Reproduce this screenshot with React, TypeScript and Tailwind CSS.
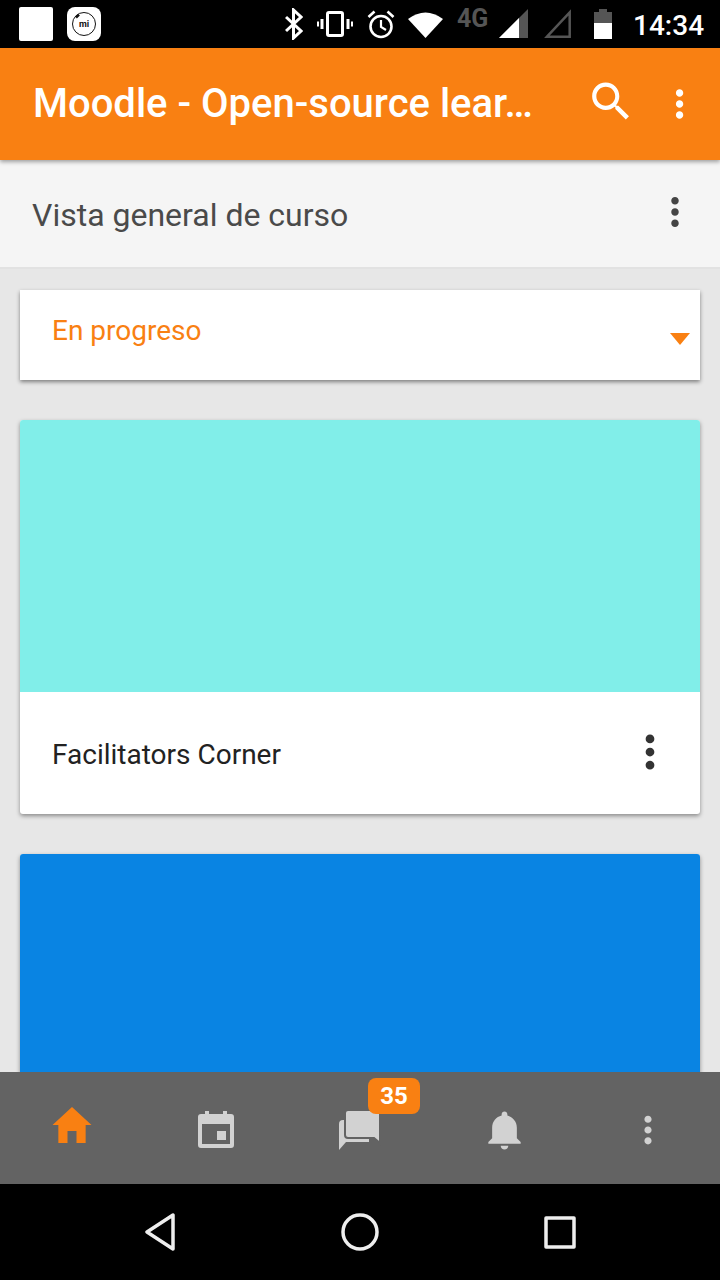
import { IoMdHome, IoMdNotifications, IoMdMore, IoMdSearch } from "react-icons/io";

function StatusBar() {
  return (
    <div className="h-12 shrink-0 bg-black flex items-center text-white relative z-20">
      <div className="ml-[19px] w-[34px] h-[34px] bg-white rounded-[2px]" />
      <div className="ml-[14px] w-[34px] h-[34px] bg-white rounded-[8px] flex items-center justify-center">
        <svg width="26" height="26" viewBox="0 0 26 26">
          <circle cx="13" cy="13" r="11.5" fill="none" stroke="#111" strokeWidth="1" />
          <path d="M5 6.5 L8 3.6" stroke="#111" strokeWidth="2.5" fill="none" />
          <text x="13" y="16" textAnchor="middle" fontSize="9" fontWeight="700" fontFamily="Roboto, sans-serif" fill="#111">mi</text>
        </svg>
      </div>
      <svg className="ml-[184px]" width="18" height="32" viewBox="0 0 18 32" fill="none" stroke="#fff" strokeWidth="3">
        <path d="M1 9 L16 23 L8.5 30 V2 L16 9 L1 23" />
      </svg>
      <svg className="ml-[14px]" width="36" height="26" viewBox="0 0 36 26" fill="none" stroke="#fff">
        <rect x="10.5" y="1.5" width="15" height="23" rx="1.5" strokeWidth="3" />
        <path d="M5 8 V18 M31 8 V18" strokeWidth="3" />
        <path d="M1 10.5 V15.5 M35 10.5 V15.5" strokeWidth="2" />
      </svg>
      <svg className="ml-[14px]" width="28" height="29" viewBox="0 0 28 29" fill="none" stroke="#fff" strokeWidth="2.6">
        <circle cx="14" cy="16.5" r="10.5" />
        <path d="M14 10 V17 L19 20" strokeWidth="2.2" />
        <path d="M1.5 7 L7.5 1.5 M26.5 7 L20.5 1.5" />
      </svg>
      <svg className="ml-[13px]" width="35" height="27" viewBox="0 0 35 27">
        <path d="M0 8 Q17.5 -5 35 8 L17.5 27 Z" fill="#fff" />
      </svg>
      <span className="ml-[14px] -mt-[11px] w-[34px] font-['Roboto',sans-serif] font-bold text-[25px] leading-none text-[#555]">4G</span>
      <svg className="ml-[8px] -mt-[1px]" width="29" height="29" viewBox="0 0 29 29">
        <path d="M0 29 L29 0 V29 Z" fill="#555" />
        <path d="M0 29 L20 9 V29 Z" fill="#fff" />
      </svg>
      <svg className="ml-[16px] -mt-[1px]" width="27" height="29" viewBox="0 0 27 29" fill="none" stroke="#555" strokeWidth="2.5">
        <path d="M3 27.7 L25.7 3.5 V27.7 Z" />
      </svg>
      <svg className="ml-[23px]" width="18" height="30" viewBox="0 0 18 30">
        <path d="M5 0 H13 V3 H18 V30 H0 V3 H5 Z" fill="#555" />
        <rect x="0" y="14" width="18" height="16" fill="#fff" />
      </svg>
      <span className="ml-[21px] mt-[3px] font-['Roboto',sans-serif] font-medium text-[28px] leading-none">14:34</span>
    </div>
  );
}

function CalendarIcon() {
  return (
    <svg className="mt-1" width="38" height="38" viewBox="0 0 38 38" fill="currentColor">
      <path fillRule="evenodd" d="M8 0 H12 V3 H26 V0 H30 V3 H34 Q37 3 37 6 V34 Q37 37 34 37 H4 Q1 37 1 34 V6 Q1 3 4 3 H8 Z M5 13 V33 H33 V13 Z" />
      <rect x="20" y="20" width="9" height="9" />
    </svg>
  );
}

function ChatIcon() {
  return (
    <svg className="mt-1" width="42" height="40" viewBox="0 0 42 40" fill="currentColor">
      <path d="M0 14 Q0 10 4 10 H30 V32 H7 L0 40 Z" />
      <path d="M9 0 H37 Q41 0 41 3 V33 L35 28 H9 Q6 28 6 25 V3 Q6 0 9 0 Z" stroke="#636363" strokeWidth="2" />
    </svg>
  );
}

function CourseCard({ color, name }: { color: string; name: string }) {
  return (
    <div className="bg-white rounded-[3px] overflow-hidden shadow-[0_2px_4px_rgba(0,0,0,0.4)] shrink-0">
      <div className="h-[272px]" style={{ background: color }} />
      <div className="h-[122px] flex items-center justify-between pl-8 pr-[22px]">
        <span className="text-[28px] text-[#222] mt-1">{name}</span>
        <IoMdMore size={56} className="text-[#333] -mt-[2px]" />
      </div>
    </div>
  );
}

export default function App() {
  return (
    <div className="w-[720px] h-[1280px] flex flex-col overflow-hidden bg-[#e7e7e7] font-['Roboto',sans-serif]">
      <StatusBar />
      <header className="h-[112px] shrink-0 bg-[#f98012] flex items-center pl-[33px] pr-[17px] shadow-[0_2px_4px_rgba(0,0,0,0.35)] relative z-10">
        <h1 className="w-[503px] whitespace-nowrap text-[40px] font-medium text-white">Moodle - Open-source lear…</h1>
        <IoMdSearch size={50} className="ml-[53px] -mt-[6px] text-white" />
        <IoMdMore size={48} className="ml-[21px] text-white" />
      </header>
      <div className="h-[109px] shrink-0 bg-[#f5f5f5] border-b-2 border-[#e2e2e2] flex items-center justify-between pl-8 pr-[21px]">
        <span className="text-[32px] text-[#4a4a4a] mt-[2px]">Vista general de curso</span>
        <IoMdMore size={48} className="text-[#444] -mt-[3px]" />
      </div>
      <main className="flex-1 min-h-0 overflow-hidden px-5 pt-[21px] flex flex-col gap-10">
        <div className="h-[90px] shrink-0 bg-white shadow-[0_2px_4px_rgba(0,0,0,0.45)] flex items-center justify-between pl-8 pr-[10px]">
          <span className="text-[28px] text-[#f98012] -mt-2">En progreso</span>
          <svg className="mt-2" width="20" height="12" viewBox="0 0 20 12">
            <path d="M0 0 H20 L10 12 Z" fill="#f98012" />
          </svg>
        </div>
        <CourseCard color="#81eee9" name="Facilitators Corner" />
        <CourseCard color="#0984e3" name="" />
      </main>
      <nav className="h-[112px] shrink-0 bg-[#636363] grid grid-cols-5 items-center relative z-10 text-[#d2d2d2]">
        <div className="flex justify-center text-[#f98012]"><IoMdHome size={48} className="-mt-[6px]" /></div>
        <div className="flex justify-center"><CalendarIcon /></div>
        <div className="relative flex justify-center">
          <ChatIcon />
          <span className="absolute left-[80px] -top-[28px] w-[52px] h-9 rounded-lg bg-[#f98012] text-white text-[24px] font-bold leading-9 text-center">35</span>
        </div>
        <div className="flex justify-center"><IoMdNotifications size={47} className="mt-1" /></div>
        <div className="flex justify-center"><IoMdMore size={46} className="mt-1" /></div>
      </nav>
      <div className="h-24 shrink-0 bg-black flex items-center justify-center gap-[165px]">
        <svg width="32" height="38" viewBox="0 0 32 38" fill="none" stroke="#eee" strokeWidth="3.5" strokeLinejoin="round">
          <path d="M29 2 V36 L3 19 Z" />
        </svg>
        <svg width="38" height="38" viewBox="0 0 38 38" fill="none" stroke="#eee" strokeWidth="3.5">
          <circle cx="19" cy="19" r="17" />
        </svg>
        <svg width="32" height="33" viewBox="0 0 32 33" fill="none" stroke="#eee" strokeWidth="3.5" strokeLinejoin="round">
          <rect x="2" y="2" width="28" height="29" />
        </svg>
      </div>
    </div>
  );
}
